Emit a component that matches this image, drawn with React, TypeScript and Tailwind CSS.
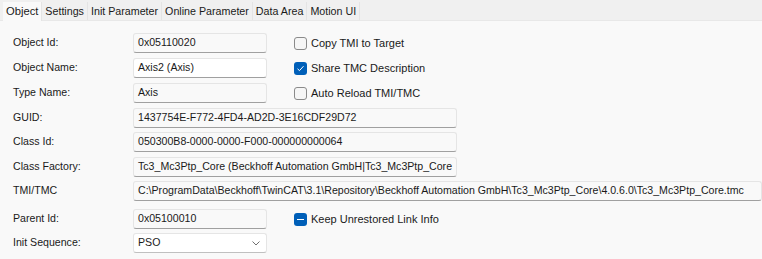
const font = { fontFamily: '"Liberation Sans", Arial, sans-serif' }

function Field({ value, width, editable }: { value: string; width: string; editable?: boolean }) {
  return (
    <div
      className={`h-[20px] ${width} flex items-center pl-[4px] border border-[#e5e5e5] border-b-[#a0a0a0] rounded-[3px] whitespace-nowrap overflow-hidden text-[#1a1a1a] ${
        editable ? "bg-white" : "bg-[#f9f9f9]"
      }`}
    >
      {value}
    </div>
  )
}

function Check({ state, label }: { state: "off" | "on" | "mixed"; label: string }) {
  return (
    <div className="flex items-center gap-[4px] ml-[27px] text-[11px]">
      {state === "off" ? (
        <div className="w-[13px] h-[13px] rounded-[3px] border border-[#8a8a8a] bg-[#f6f6f6]" />
      ) : (
        <div className="w-[13px] h-[13px] rounded-[3px] bg-[#005fb8] flex items-center justify-center">
          {state === "on" ? (
            <svg width="9" height="9" viewBox="0 0 9 9">
              <path d="M1.5 4.8 L3.5 6.6 L7.5 2.2" fill="none" stroke="white" strokeWidth="1" />
            </svg>
          ) : (
            <div className="w-[7px] h-[1px] bg-white" />
          )}
        </div>
      )}
      <span className="text-[#1a1a1a]">{label}</span>
    </div>
  )
}

function Row({ label, children, className }: { label: string; children: React.ReactNode; className?: string }) {
  return (
    <div className={`flex items-center ${className ?? ""}`}>
      <div className="w-[120px] shrink-0 text-[#1a1a1a]">{label}</div>
      {children}
    </div>
  )
}

const tabs = ["Object", "Settings", "Init Parameter", "Online Parameter", "Data Area", "Motion UI"]

export default function App() {
  return (
    <div className="w-[762px] h-[259px] bg-[#f9f9f9] text-[10.6px] overflow-hidden" style={font}>
      <div className="h-[21px] bg-[#f0f0f0] flex items-end pl-[3px] border-b border-[#e8e8e8] text-[10.7px]">
        {tabs.map((t, i) => (
          <div
            key={t}
            className={`h-[18px] px-[3px] flex items-center border-r border-[#e4e4e4] ${
              i === 0 ? "bg-[#f9f9f9] h-[19px] text-[11.2px] -mb-px" : "bg-[#f0f0f0]"
            } text-[#1a1a1a]`}
          >
            {t}
          </div>
        ))}
      </div>
      <div className="pl-[13px] pt-[12px] flex flex-col">
        <Row label="Object Id:">
          <Field value="0x05110020" width="w-[134px]" />
          <Check state="off" label="Copy TMI to Target" />
        </Row>
        <Row label="Object Name:" className="mt-[5px]">
          <Field value="Axis2 (Axis)" width="w-[134px]" editable />
          <Check state="on" label="Share TMC Description" />
        </Row>
        <Row label="Type Name:" className="mt-[5px]">
          <Field value="Axis" width="w-[134px]" />
          <Check state="off" label="Auto Reload TMI/TMC" />
        </Row>
        <Row label="GUID:" className="mt-[5px]">
          <Field value="1437754E-F772-4FD4-AD2D-3E16CDF29D72" width="w-[324px]" />
        </Row>
        <Row label="Class Id:" className="mt-[4px]">
          <Field value="050300B8-0000-0000-F000-000000000064" width="w-[324px]" />
        </Row>
        <Row label="Class Factory:" className="mt-[5px]">
          <Field value="Tc3_Mc3Ptp_Core (Beckhoff Automation GmbH|Tc3_Mc3Ptp_Core" width="w-[324px]" />
        </Row>
        <Row label="TMI/TMC" className="mt-[4px]">
          <Field
            value="C:\ProgramData\Beckhoff\TwinCAT\3.1\Repository\Beckhoff Automation GmbH\Tc3_Mc3Ptp_Core\4.0.6.0\Tc3_Mc3Ptp_Core.tmc"
            width="w-[640px]"
          />
        </Row>
        <Row label="Parent Id:" className="mt-[8px]">
          <Field value="0x05100010" width="w-[134px]" />
          <Check state="mixed" label="Keep Unrestored Link Info" />
        </Row>
        <Row label="Init Sequence:" className="mt-[4px]">
          <div className="h-[20px] w-[134px] flex items-center justify-between pl-[4px] pr-[6px] border border-[#e5e5e5] border-b-[#c0c0c0] rounded-[3px] bg-white text-[#1a1a1a]">
            <span>PSO</span>
            <svg width="8" height="5" viewBox="0 0 8 5">
              <path d="M0.5 0.5 L4 4 L7.5 0.5" fill="none" stroke="#707070" strokeWidth="1" />
            </svg>
          </div>
        </Row>
      </div>
    </div>
  )
}
